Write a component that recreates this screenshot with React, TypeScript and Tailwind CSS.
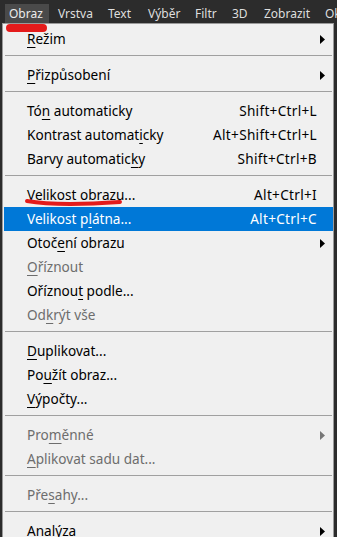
import React from "react";

type Item =
    | { sep: true }
    | {
          sep?: false;
          label: string;
          key?: number;
          shortcut?: string;
          sub?: boolean;
          disabled?: boolean;
          active?: boolean;
      };

const items: Item[] = [
    { label: "Režim", key: 0, sub: true },
    { sep: true },
    { label: "Přizpůsobení", key: 0, sub: true },
    { sep: true },
    { label: "Tón automaticky", key: 2, shortcut: "Shift+Ctrl+L" },
    { label: "Kontrast automaticky", key: 16, shortcut: "Alt+Shift+Ctrl+L" },
    { label: "Barvy automaticky", key: 15, shortcut: "Shift+Ctrl+B" },
    { sep: true },
    { label: "Velikost obrazu...", key: 13, shortcut: "Alt+Ctrl+I" },
    { label: "Velikost plátna...", key: 10, shortcut: "Alt+Ctrl+C", active: true },
    { label: "Otočení obrazu", key: 4, sub: true },
    { label: "Oříznout", key: 0, disabled: true },
    { label: "Oříznout podle...", key: 7 },
    { label: "Odkrýt vše", key: 2, disabled: true },
    { sep: true },
    { label: "Duplikovat...", key: 0 },
    { label: "Použít obraz...", key: 2 },
    { label: "Výpočty...", key: 0 },
    { sep: true },
    { label: "Proměnné", key: 3, sub: true, disabled: true },
    { label: "Aplikovat sadu dat...", key: 0, disabled: true },
    { sep: true },
    { label: "Přesahy...", key: 3, disabled: true },
    { sep: true },
    { label: "Analýza", sub: true },
];

// menu bar tabs, widths measured from the screenshot
const tabs = [
    { name: "Obraz", cls: "w-[58px] pl-[9px]" },
    { name: "Vrstva", cls: "w-[50px]" },
    { name: "Text", cls: "w-[40px]" },
    { name: "Výběr", cls: "w-[47px]" },
    { name: "Filtr", cls: "w-[37px]" },
    { name: "3D", cls: "w-[32px]" },
    { name: "Zobrazit", cls: "w-[61px]" },
    { name: "Okno", cls: "w-[40px]" },
];

function Mnemonic({ label, at }: { label: string; at?: number }) {
    if (at === undefined) return <>{label}</>;
    return (
        <>
            {label.slice(0, at)}
            <span className="underline underline-offset-[3px] decoration-1">{label[at]}</span>
            {label.slice(at + 1)}
        </>
    );
}

function Arrow({ color }: { color: string }) {
    return (
        <svg width="5" height="9" viewBox="0 0 5 9">
            <path d="M0 0 L5 4.5 L0 9 Z" fill={color} />
        </svg>
    );
}

export default function App() {
    return (
        <div
            className="relative w-[337px] h-[537px] overflow-hidden bg-[#2c2c2c]"
            style={{ fontFamily: '"Noto Sans", "Open Sans", sans-serif' }}
        >
            {/* menu bar */}
            <div className="h-[23px] pt-[4px] flex text-[12px] text-[#dedede] whitespace-nowrap">
                {tabs.map((t, i) => (
                    <div key={t.name} className={"h-[19px] shrink-0 flex items-center " + t.cls}>
                        {i === 0 ? (
                            <span className="-ml-[4px] h-[19px] w-[44px] pl-[4px] flex items-center bg-[#4a4a4a] text-[#ececec]">
                                {t.name}
                            </span>
                        ) : (
                            t.name
                        )}
                    </div>
                ))}
            </div>

            {/* dropdown */}
            <div className="ml-[2px] mr-[3px] border border-[#9a9a9a] bg-[#f0f0f0] pt-[3px] text-[13.6px] text-black">
                {items.map((it, i) =>
                    it.sep ? (
                        <div key={i} className="h-[12px] pt-[4px] pl-[2px] pr-[1px]">
                            <div className="h-px bg-[#a0a0a0]" />
                        </div>
                    ) : (
                        <div
                            key={i}
                            className={
                                "h-[24px] flex items-center pl-[23px] ml-px " +
                                (it.active
                                    ? "bg-[#0078d7] text-white"
                                    : it.disabled
                                    ? "text-[#6d6d6d]"
                                    : "text-black")
                            }
                        >
                            <span className="flex-1 whitespace-nowrap">
                                <Mnemonic label={it.label} at={it.key} />
                            </span>
                            {it.shortcut && (
                                <span className="whitespace-nowrap tracking-[0.3px]">{it.shortcut}</span>
                            )}
                            <span className="w-[16px] pl-[3px] flex items-center">
                                {it.sub && <Arrow color={it.disabled ? "#777" : "#000"} />}
                            </span>
                        </div>
                    )
                )}
            </div>

            {/* red annotation marks */}
            <svg className="absolute left-0 top-0 pointer-events-none" width="337" height="537">
                <rect x="6" y="24" width="41" height="8" rx="4" fill="#e41b1b" />
                <path
                    d="M27 201 C 50 205, 90 204, 120 202"
                    stroke="#e41b1b"
                    strokeWidth="4"
                    strokeLinecap="round"
                    fill="none"
                />
            </svg>
        </div>
    );
}
